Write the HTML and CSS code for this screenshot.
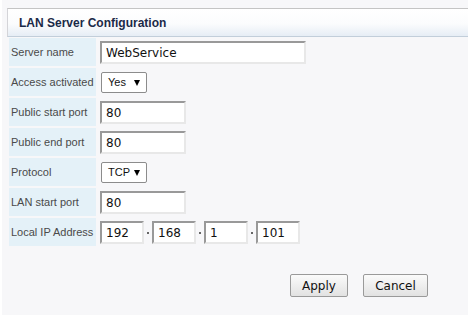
FILE: index.html
```html
<!DOCTYPE html>
<html lang="en">
<head>
    <meta charset="UTF-8">
    <title>LAN Server Configuration</title>
    <link rel="stylesheet" href="styles.css">
</head>
<body>

    <div class="panel">
        <div class="panel-header">
            <h2>LAN Server Configuration</h2>
        </div>

        <form class="config-form">
            <div class="form-row">
                <label for="serverName">Server name</label>
                <div class="field"><input type="text" id="serverName" class="input-wide" value="WebService"></div>
            </div>

            <div class="form-row">
                <label for="access">Access activated</label>
                <div class="field"><span class="dropdown" id="access">Yes <span class="arrow"></span></span></div>
            </div>

            <div class="form-row">
                <label for="pubStart">Public start port</label>
                <div class="field"><input type="text" id="pubStart" class="input-port" value="80"></div>
            </div>

            <div class="form-row">
                <label for="pubEnd">Public end port</label>
                <div class="field"><input type="text" id="pubEnd" class="input-port" value="80"></div>
            </div>

            <div class="form-row">
                <label for="protocol">Protocol</label>
                <div class="field"><span class="dropdown" id="protocol">TCP <span class="arrow"></span></span></div>
            </div>

            <div class="form-row">
                <label for="lanStart">LAN start port</label>
                <div class="field"><input type="text" id="lanStart" class="input-port" value="80"></div>
            </div>

            <div class="form-row">
                <label for="ip1">Local IP Address</label>
                <div class="field ip-field">
                    <input type="text" id="ip1" class="input-ip" value="192">
                    <span class="dot"></span>
                    <input type="text" class="input-ip" value="168">
                    <span class="dot"></span>
                    <input type="text" class="input-ip" value="1">
                    <span class="dot"></span>
                    <input type="text" class="input-ip" value="101">
                </div>
            </div>

            <div class="form-actions">
                <button type="button" class="btn btn-apply">Apply</button>
                <button type="button" class="btn btn-cancel">Cancel</button>
            </div>
        </form>
    </div>

</body>
</html>
```

FILE: styles.css
```css
/* Page */
body {
    margin: 0;
    background-color: #ffffff;
    font-family: 'Liberation Sans', Arial, sans-serif;
}

/* Outer panel */
.panel {
    margin-left: 2px;
    height: 315px;
    padding: 8px 0 0 5px;
    box-sizing: border-box;
    background-color: #f7f7f9;
    overflow: hidden;
}

/* Title bar */
.panel-header {
    height: 27px;
    border-top: 1px solid #c4c4c4;
    border-left: 1px solid #d4d4d8;
    border-bottom: 1px solid #c2ceda;
    background: linear-gradient(#ffffff, #fbfcfd 55%, #e6edf5);
    display: flex;
    align-items: center;
    padding-left: 11px;
}

.panel-header h2 {
    margin: 0;
    font-size: 12px;
    font-weight: bold;
    color: #1b2a48;
}

/* Form rows */
.config-form {
    display: flex;
    flex-direction: column;
    gap: 2px;
    padding: 1px 0 0 2px;
}

.form-row {
    display: flex;
    align-items: center;
    gap: 4px;
    height: 28px;
}

.form-row label {
    width: 85px;
    height: 28px;
    padding-left: 2px;
    display: flex;
    align-items: center;
    background-color: #e4f1f8;
    font-size: 11px;
    color: #4a4a4a;
}

.field {
    display: flex;
    align-items: center;
}

/* Text inputs */
input[type="text"] {
    height: 23px;
    box-sizing: border-box;
    border-style: solid;
    border-width: 2px;
    border-color: #999999 #e8e8e8 #e8e8e8 #999999;
    background: #ffffff;
    font-family: 'DejaVu Sans', Verdana, sans-serif;
    font-size: 12px;
    color: #111111;
    padding: 1px 0 0 4px;
    margin: 0;
}

.input-wide { width: 206px; }
.input-port { width: 86px; }
.input-ip { width: 44px; }

/* small square between the IP octets */
.ip-field .dot {
    width: 2px;
    height: 2px;
    margin: 1px 3px 0;
    background-color: #666;
}

/* Fake select */
.dropdown {
    display: inline-flex;
    align-items: center;
    justify-content: space-between;
    width: 46px;
    height: 21px;
    box-sizing: border-box;
    border: 1px solid #8c8c8c;
    border-radius: 2px;
    background: #ffffff;
    padding: 0 6px 0 6px;
    margin-left: 1px;
    font-size: 11px;
    color: #111;
}

/* down triangle */
.dropdown .arrow {
    width: 0;
    height: 0;
    border-left: 3px solid transparent;
    border-right: 3px solid transparent;
    border-top: 6px solid #000;
    margin-top: 1px;
}

/* Buttons */
.form-actions {
    display: flex;
    gap: 15px;
    margin-top: 26px;
    padding-left: 281px;
}

.btn {
    height: 23px;
    border: 1px solid #9a9a9a;
    border-radius: 2px;
    background: linear-gradient(#fbfbfb, #e2e2e2);
    font-family: 'DejaVu Sans', Verdana, sans-serif;
    font-size: 12px;
    color: #111;
    padding: 0;
}

.btn-apply { width: 58px; }
.btn-cancel { width: 65px; }
```
